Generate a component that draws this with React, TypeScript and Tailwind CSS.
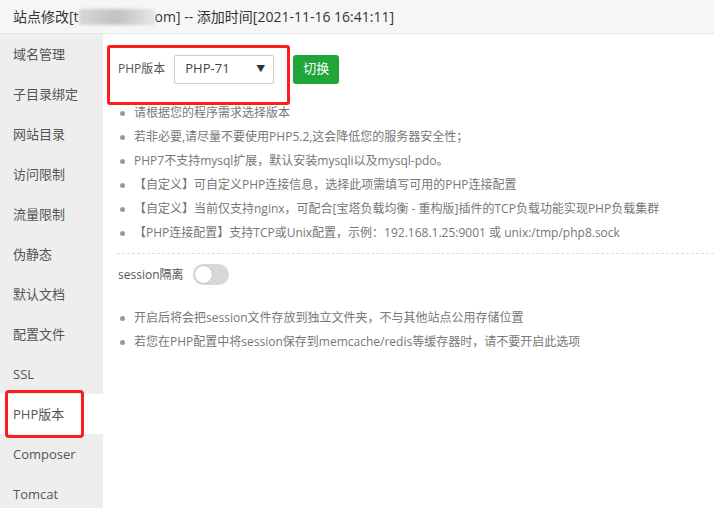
import { type ReactNode } from 'react';

// sidebar menu entries of the site settings dialog
const menuItems = [
  '域名管理',
  '子目录绑定',
  '网站目录',
  '访问限制',
  '流量限制',
  '伪静态',
  '默认文档',
  '配置文件',
  'SSL',
  'PHP版本',
  'Composer',
  'Tomcat',
];

const phpTips = [
  '请根据您的程序需求选择版本',
  '若非必要,请尽量不要使用PHP5.2,这会降低您的服务器安全性；',
  'PHP7不支持mysql扩展，默认安装mysqli以及mysql-pdo。',
  '【自定义】可自定义PHP连接信息，选择此项需填写可用的PHP连接配置',
  '【自定义】当前仅支持nginx，可配合[宝塔负载均衡 - 重构版]插件的TCP负载功能实现PHP负载集群',
  '【PHP连接配置】支持TCP或Unix配置，示例：192.168.1.25:9001 或 unix:/tmp/php8.sock',
];

const sessionTips = [
  '开启后将会把session文件存放到独立文件夹，不与其他站点公用存储位置',
  '若您在PHP配置中将session保存到memcache/redis等缓存器时，请不要开启此选项',
];

const Tip = ({ children }: { children: ReactNode }) => (
  <li className="flex items-center h-[24px] whitespace-nowrap">
    <span className="ml-[2px] mr-[9px] w-[5px] h-[5px] rounded-full bg-[#999]" />
    <span className="text-[12px] text-[#777]">{children}</span>
  </li>
);

export default function App() {
  const active = 'PHP版本';

  return (
    <div
      className="relative w-[714px] h-[508px] overflow-hidden bg-white"
      style={{ fontFamily: '"Open Sans", "Noto Sans CJK SC", sans-serif' }}
    >
      {/* Dialog title bar */}
      <div className="h-[34px] flex items-center px-[13px] bg-[#f6f6f6] border-b border-[#e8e8e8] text-[14px] text-[#333] whitespace-nowrap">
        <span>站点修改[t</span>
        <span className="inline-block w-[76px] h-[16px] bg-linear-to-r from-[#d6d6d6] via-[#c2c2c2] to-[#e6e6e6] blur-[1.5px]" />
        <span>om] -- 添加时间[2021-11-16 16:41:11]</span>
      </div>

      <div className="flex h-[474px]">
        {/* Left menu */}
        <div className="w-[103px] bg-[#eeeeee] flex flex-col">
          {menuItems.map((item) => (
            <div
              key={item}
              className={`h-[40px] shrink-0 flex items-center pl-[13px] pt-[2px] text-[13px] text-[#555] ${
                item === active ? 'bg-white' : ''
              }`}
            >
              {item}
            </div>
          ))}
        </div>

        {/* Content */}
        <div className="flex-1 pl-[15px] pt-[20px]">
          <div className="flex items-center h-[30px]">
            <span className="text-[12px] text-[#555] mr-[9px]">PHP版本</span>
            <div className="w-[100px] h-[29px] border border-[#ccc] rounded-[2px] flex items-center justify-between pl-[10px] pr-[8px] text-[13px] text-[#444]">
              <span>PHP-71</span>
              <span className="text-[9px] text-[#333]">▼</span>
            </div>
            <button className="ml-[19px] w-[46px] h-[29px] rounded-[3px] bg-[#20a53a] text-white text-[13px]">
              切换
            </button>
          </div>

          <ul className="mt-[17px]">
            {phpTips.map((t) => (
              <Tip key={t}>{t}</Tip>
            ))}
          </ul>

          <div className="mt-[8px] -ml-[1px] border-t border-dashed border-[#ddd]" />

          <div className="mt-[10px] flex items-center h-[21px]">
            <span className="text-[12px] text-[#555] mr-[9px]">session隔离</span>
            <div className="w-[36px] h-[21px] rounded-full bg-[#d8d8d8] p-[1px]">
              <div className="w-[19px] h-[19px] rounded-full bg-white border border-[#c8c8c8]" />
            </div>
          </div>

          <ul className="mt-[21px]">
            {sessionTips.map((t) => (
              <Tip key={t}>{t}</Tip>
            ))}
          </ul>
        </div>
      </div>

      {/* Red annotation boxes over the screenshot */}
      <div className="absolute left-[107px] top-[45px] w-[183px] h-[60px] border-[3px] border-[#ff1c1c] rounded-[3px]" />
      <div className="absolute left-[5px] top-[390px] w-[79px] h-[48px] border-[3px] border-[#ff1c1c] rounded-[4px]" />
    </div>
  );
}
